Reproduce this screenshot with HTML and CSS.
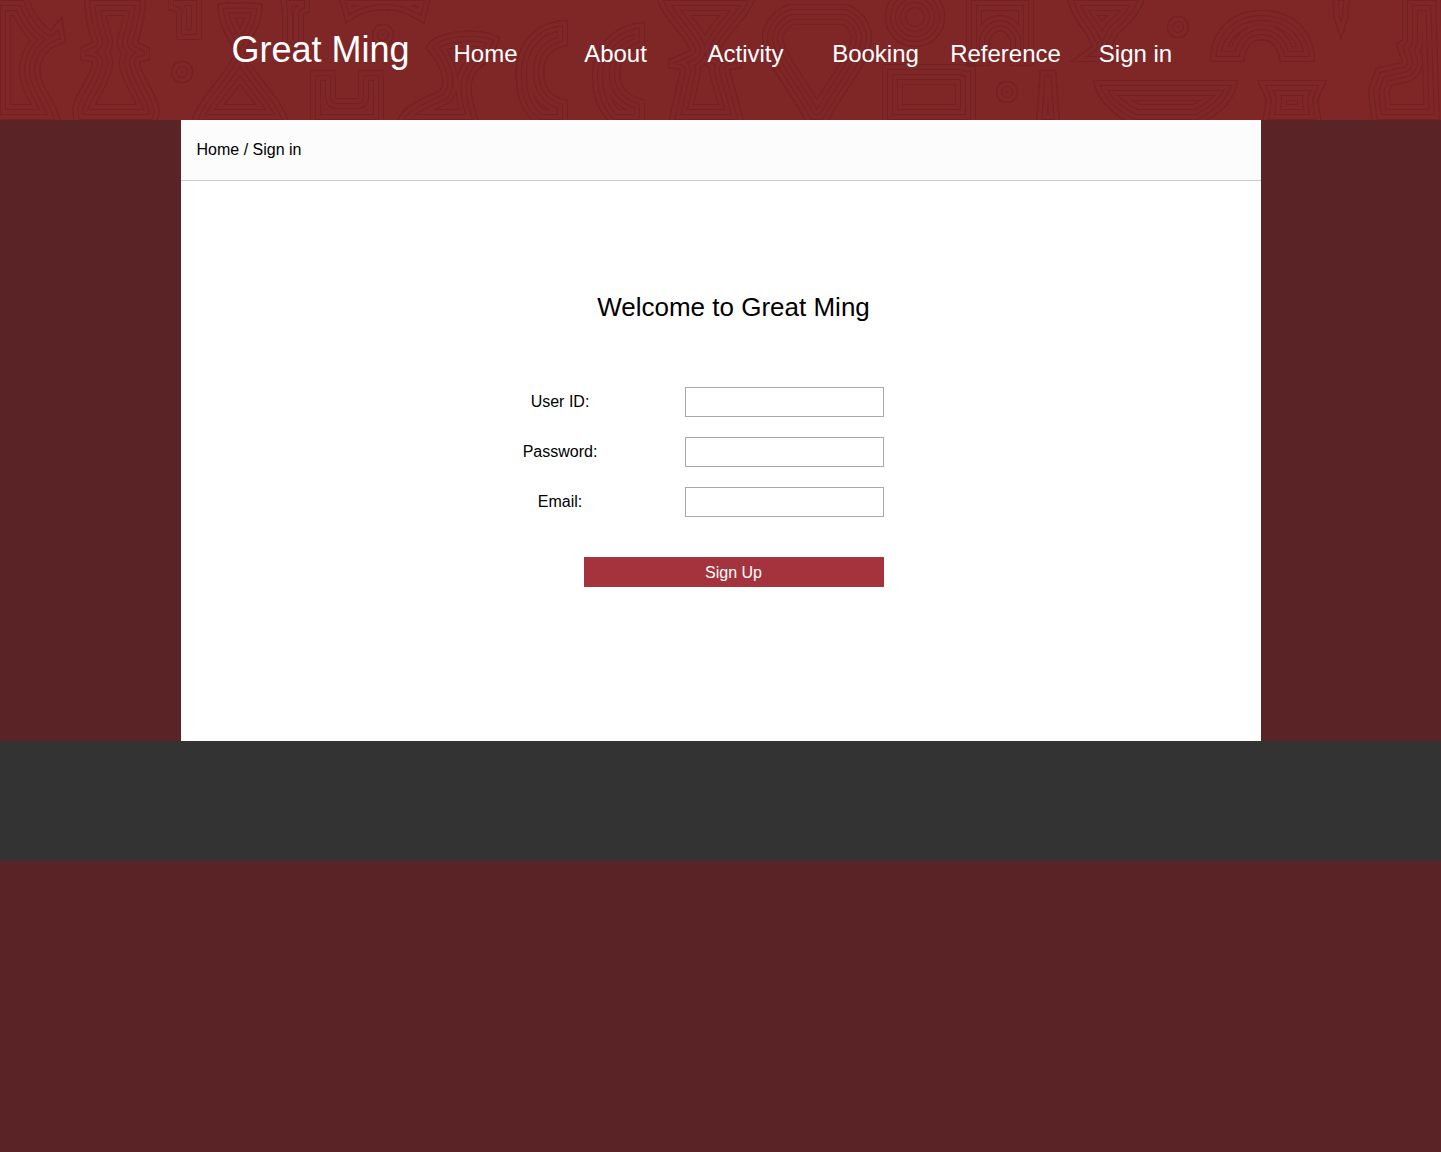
FILE: index.html
```html
<!DOCTYPE html>
<html lang="en">
<head>
    <meta charset="UTF-8" />
    <meta name="viewport" content="width=device-width, initial-scale=1.0" />
    <title>Great Ming - Sign in</title>
    <link rel="stylesheet" href="styles.css">
</head>
<body>

    <header class="site-header">
        <svg class="header-pattern" width="1441" height="120" viewBox="0 0 1441 120" aria-hidden="true">
            <defs>
                <path id="motifs" d="
                    M-10 -5 L28 -5 C32 12 42 24 50 30 L62 17 L66 42 L52 48 C44 54 40 62 40 72 C42 88 56 100 62 125 L-10 125 Z
                    M84 -5 L146 -5 C146 14 142 30 138 42 L150 48 L150 60 L140 62 C142 78 158 94 160 112 L156 125 L74 125 L72 108 C76 92 90 78 92 62 L80 60 L80 48 L92 42 C88 30 84 14 84 -5 Z
                    M168 -5 L202 -5 L202 40 L176 40 L176 12 L168 10 Z
                    M218 4 C222 2 258 2 262 4 C264 22 252 38 245 52 C254 76 282 96 290 125 L190 125 C198 96 226 76 235 52 C228 38 216 22 218 4 Z
                    M280 -5 L310 -5 L310 12 L304 14 L304 50 L282 50 L282 12 Z
                    M338 -5 L432 -5 L424 24 C408 14 400 10 385 10 C370 10 358 14 346 24 Z
                    M310 70 L336 70 L336 98 L358 98 L358 70 L384 70 L384 125 L310 125 Z
                    M425 48 C436 26 490 28 500 38 C496 52 486 64 478 70 C470 80 468 90 480 125 L396 125 C400 106 420 100 440 90 C446 82 440 62 425 48 Z
                    M568 20 C530 20 514 50 516 78 C516 100 525 116 538 125 L568 125 L568 100 C552 98 544 88 544 72 C544 56 552 48 568 46 Z
                    M645 22 C612 24 592 48 592 76 C592 100 602 116 612 125 L645 125 L645 100 C628 96 620 88 620 74 C620 58 630 50 645 46 Z
                    M656 -5 L756 -5 C752 16 730 30 720 50 L742 60 L742 68 L730 70 L745 125 L668 125 L680 70 L668 68 L668 60 L690 50 C680 30 660 16 656 -5 Z
                    M790 4 L846 4 C860 8 870 20 872 36 C872 62 844 90 826 125 L808 125 C790 90 762 62 762 36 C764 20 776 8 790 4 Z
                    M882 64 L976 64 L976 125 L882 125 Z
                    M966 -5 L1034 -5 L1034 66 L1010 66 L1010 40 C1004 28 996 28 990 40 L990 66 L966 66 Z
                    M1066 -5 L1146 -5 C1142 12 1130 24 1118 34 L1112 46 L1128 62 L1070 62 L1092 46 L1086 34 C1078 24 1070 12 1066 -5 Z
                    M1210 62 C1210 30 1232 10 1262 10 C1292 10 1315 30 1315 62 L1280 62 C1278 46 1270 40 1262 40 C1252 40 1246 46 1244 62 Z
                    M1332 -5 L1350 -5 L1348 18 L1341 40 L1334 18 Z
                    M1036 125 L1040 70 L1056 70 L1060 125 Z
                    M1093 80 L1238 80 C1236 96 1226 112 1198 125 L1134 125 C1106 112 1096 96 1093 80 Z
                    M1257 80 L1327 80 L1318 100 L1322 125 L1262 125 L1266 100 Z
                    M1402 -5 L1441 -5 L1445 125 L1372 125 L1368 90 L1376 68 L1402 62 L1396 44 L1402 40 Z
                    M182 72 m-11 0 a11 11 0 1 0 22 0 a11 11 0 1 0 -22 0 Z
                    M383 35 m-11 0 a11 11 0 1 0 22 0 a11 11 0 1 0 -22 0 Z
                    M915 17 m-30 0 a30 30 0 1 0 60 0 a30 30 0 1 0 -60 0 Z
                    M1007 92 m-11 0 a11 11 0 1 0 22 0 a11 11 0 1 0 -22 0 Z
                    M1178 27 m-11 0 a11 11 0 1 0 22 0 a11 11 0 1 0 -22 0 Z
                " />
                <clipPath id="motif-clip"><use href="#motifs" /></clipPath>
            </defs>
            <g clip-path="url(#motif-clip)">
                <use href="#motifs" class="ln w42" />
                <use href="#motifs" class="gap w40" />
                <use href="#motifs" class="ln w32" />
                <use href="#motifs" class="gap w30" />
                <use href="#motifs" class="ln w22" />
                <use href="#motifs" class="gap w20" />
                <use href="#motifs" class="ln w12" />
                <use href="#motifs" class="gap w10" />
                <use href="#motifs" class="ln w2" />
            </g>
        </svg>

        <div class="header-inner">
            <div class="logo">Great Ming</div>
            <nav class="main-nav">
                <a href="#">Home</a>
                <a href="#">About</a>
                <a href="#">Activity</a>
                <a href="#">Booking</a>
                <a href="#">Reference</a>
                <a href="#">Sign in</a>
            </nav>
        </div>
    </header>

    <main class="content">
        <div class="breadcrumb">Home / Sign in</div>

        <form class="signup">
            <h1>Welcome to Great Ming</h1>

            <div class="field">
                <label for="userId">User ID:</label>
                <input type="text" id="userId">
            </div>
            <div class="field">
                <label for="password">Password:</label>
                <input type="password" id="password">
            </div>
            <div class="field">
                <label for="email">Email:</label>
                <input type="text" id="email">
            </div>

            <button type="button">Sign Up</button>
        </form>
    </main>

    <footer class="site-footer"></footer>

</body>
</html>
```

FILE: styles.css
```css
body {
    margin: 0;
    font-family: "Liberation Sans", Arial, sans-serif;
    font-size: 16px;
    color: #000;
    background-color: #5a2427;
}

.site-header {
    position: relative;
    height: 120px;
    overflow: hidden;
    background-color: #7f2627;
}

.header-pattern {
    position: absolute;
    top: 0;
    left: 0;
}

.header-pattern use {
    fill: none;
    stroke-linejoin: round;
}

.header-pattern .ln {
    stroke: #722224;
}

.header-pattern .gap {
    stroke: #7f2627;
}

.w42 { stroke-width: 42px; }
.w40 { stroke-width: 40px; }
.w32 { stroke-width: 32px; }
.w30 { stroke-width: 30px; }
.w22 { stroke-width: 22px; }
.w20 { stroke-width: 20px; }
.w12 { stroke-width: 12px; }
.w10 { stroke-width: 10px; }
.w2 { stroke-width: 2px; }

.header-inner {
    position: relative;
    display: flex;
    width: 1080px;
    margin: 0 auto;
    padding-left: 40px;
    box-sizing: border-box;
    color: #fff;
}

.logo {
    width: 200px;
    font-size: 36px;
    line-height: 100px;
    text-align: center;
}

.main-nav {
    display: flex;
}

.main-nav a {
    width: 130px;
    font-size: 24px;
    line-height: 108px;
    text-align: center;
    color: #fff;
    text-decoration: none;
}

.content {
    width: 1080px;
    height: 621px;
    margin: 0 auto;
    background-color: #fff;
}

.breadcrumb {
    height: 60px;
    padding-left: 16px;
    line-height: 59px;
    background-color: #fcfcfc;
    border-bottom: 1px solid #ccc;
}

.signup {
    width: 400px;
    margin-left: 303px;
    padding-top: 106px;
}

.signup h1 {
    margin: 0 0 60px 100px;
    font-size: 26px;
    font-weight: normal;
    line-height: 40px;
    text-align: center;
}

.field {
    display: flex;
    align-items: center;
    justify-content: space-between;
    margin-bottom: 20px;
}

.field label {
    width: 153px;
    text-align: center;
}

.field input {
    width: 199px;
    height: 30px;
    padding: 0 4px;
    box-sizing: border-box;
    border: 1px solid #a9a9a9;
    background-color: #fff;
}

.signup button {
    display: block;
    width: 300px;
    height: 30px;
    margin: 40px 0 0 100px;
    padding: 2px 0 0;
    border: none;
    background-color: #a5333d;
    color: #fff;
    font-family: inherit;
    font-size: 16px;
}

.site-footer {
    height: 120px;
    background-color: #333;
}
```
